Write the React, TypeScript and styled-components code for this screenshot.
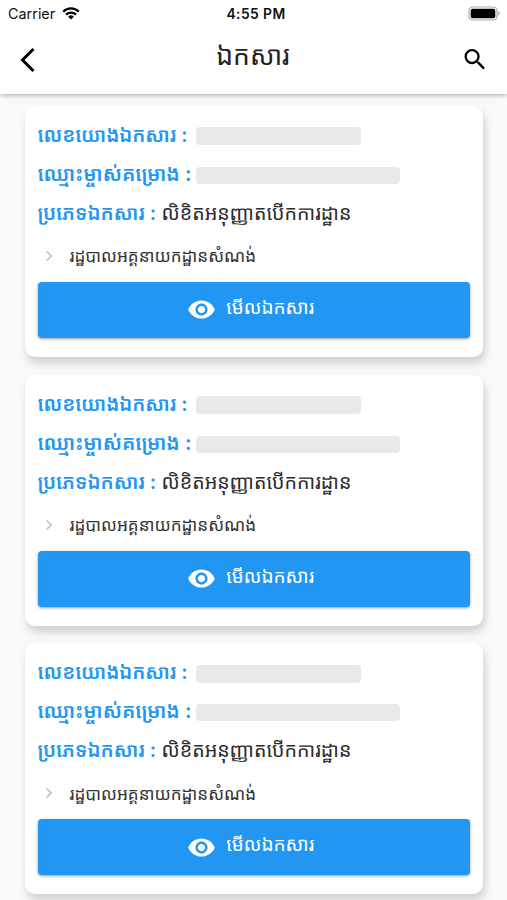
import React from 'react';
import styled, { createGlobalStyle } from 'styled-components';
import { MdSearch, MdVisibility, MdChevronRight } from 'react-icons/md';

const GlobalStyle = createGlobalStyle`
  * { box-sizing: border-box; }
  body { margin: 0; background: #fafafa; font-family: Inter, 'Noto Sans', 'Noto Sans Khmer', 'Khmer OS', sans-serif; }
`;

const Screen = styled.main`
  height: 900px;
  overflow: hidden;
  display: flex;
  flex-direction: column;
  background: #fafafa;
`;

const Header = styled.header`
  flex: none;
  position: relative;
  z-index: 1;
  height: 94px;
  background: #fff;
  box-shadow: 0 1px 5px rgba(0, 0, 0, 0.35);
`;

const StatusBar = styled.div`
  height: 27px;
  padding: 0 7px 0 8px;
  display: grid;
  grid-template-columns: 1fr auto 1fr;
  align-items: center;
  color: #111;
  font-size: 14px;
`;

const Carrier = styled.div`
  display: flex;
  align-items: center;
  gap: 7px;
  font-size: 14.4px;
`;

const Clock = styled.time`
  margin-left: 4px;
  font-size: 13.8px;
  font-weight: 600;
  letter-spacing: 0.45px;
`;

const BatterySlot = styled.div`
  display: flex;
  justify-content: flex-end;
`;

const NavBar = styled.nav`
  height: 66px;
  padding: 0 18px 0 14px;
  display: grid;
  grid-template-columns: 28px 1fr 28px;
  align-items: center;
`;

const IconButton = styled.button`
  width: 28px;
  height: 28px;
  margin-top: -1px;
  padding: 0;
  border: 0;
  background: none;
  display: flex;
  align-items: center;
  justify-content: center;
  color: #000;
`;

const Title = styled.h1`
  margin: 0 0 11px 3px;
  text-align: center;
  color: #222;
  font-size: 26.5px;
  font-weight: 400;
  line-height: 40px;
  white-space: nowrap;
`;

const List = styled.section`
  padding: 11.75px 24.5px 0 25px;
  display: flex;
  flex-direction: column;
  gap: 17.75px;
`;

const Card = styled.article`
  flex: none;
  height: 251px;
  padding: 11px 12.5px 0 12.5px;
  border-radius: 10px;
  background: #fff;
  box-shadow: 2px 6px 10px rgba(70, 85, 80, 0.25);
`;

const Field = styled.div`
  height: 39px;
  display: flex;
  align-items: center;
  white-space: nowrap;
  line-height: 36.5px;
`;

const Label = styled.span<{ $width: number; $size: number }>`
  flex: none;
  width: ${({ $width }) => $width}px;
  height: 39px;
  color: #2196f3;
  font-size: ${({ $size }) => $size}px;
  font-weight: 600;
`;

const Value = styled.span`
  height: 39px;
  color: #2b2b2b;
  font-size: 19.65px;
`;

const Placeholder = styled.span<{ $width: number; $height: number }>`
  width: ${({ $width }) => $width}px;
  height: ${({ $height }) => $height}px;
  border-radius: 4px;
  background: #e9e9e9;
`;

const Department = styled.div`
  height: 48px;
  padding: 0 0 4px 1px;
  display: flex;
  align-items: center;
  gap: 11px;
  color: #333;
  font-size: 17.1px;
  white-space: nowrap;

  svg { color: #c4c4c4; }
`;

const ViewButton = styled.button`
  width: 100%;
  height: 56px;
  padding: 0 6px 0 0;
  border: 0;
  border-radius: 4px;
  background: #2196f3;
  box-shadow: 0 1px 3px rgba(0, 0, 0, 0.4);
  display: flex;
  align-items: center;
  justify-content: center;
  gap: 10px;
  color: #fff;
  font-family: inherit;
  font-size: 19px;
`;

const ButtonText = styled.span`
  margin-bottom: 4px;
  line-height: 36px;
`;

const records = [1, 2, 3];

const Wifi = () => (
  <svg width="18" height="13" viewBox="0 0 18 13" fill="none" stroke="#000" strokeWidth="2.2">
    <path d="M1.2 4.7a11 11 0 0 1 15.6 0M4 7.6a7.1 7.1 0 0 1 10 0" />
    <path d="M9 12.5 6.1 9.7a4.1 4.1 0 0 1 5.8 0Z" fill="#000" stroke="none" />
  </svg>
);

const Battery = () => (
  <svg width="32" height="15" viewBox="0 0 32 15">
    <rect x="1" y="1" width="28" height="13" rx="3.8" fill="#fff" stroke="#aaa" strokeWidth="1.2" />
    <rect x="2.7" y="2.7" width="24.6" height="9.6" rx="2" />
    <path d="M30.4 5.3a2.4 2.4 0 0 1 0 4.4Z" fill="#aaa" />
  </svg>
);

const BackIcon = () => (
  <svg width="16" height="26" viewBox="0 0 16 26" fill="none" stroke="#000" strokeWidth="3">
    <path d="M13.5 2 2.5 13 13.5 24" />
  </svg>
);

const DocumentCard = () => (
  <Card>
    <Field>
      <Label $width={158.5} $size={19.7}>លេខយោងឯកសារ :</Label>
      <Placeholder $width={165} $height={18} />
    </Field>
    <Field>
      <Label $width={158.5} $size={20.2}>ឈ្មោះម្ចាស់គម្រោង :</Label>
      <Placeholder $width={204} $height={17} />
    </Field>
    <Field>
      <Label $width={124} $size={19.8}>ប្រភេទឯកសារ :</Label>
      <Value>លិខិតអនុញ្ញាតបើកការដ្ឋាន</Value>
    </Field>
    <Department>
      <MdChevronRight size={20} />
      <span>រដ្ឋបាលអគ្គនាយកដ្ឋានសំណង់</span>
    </Department>
    <ViewButton>
      <MdVisibility size={29} />
      <ButtonText>មើលឯកសារ</ButtonText>
    </ViewButton>
  </Card>
);

export default function App() {
  return (
    <Screen>
      <GlobalStyle />
      <Header>
        <StatusBar>
          <Carrier>Carrier <Wifi /></Carrier>
          <Clock>4:55 PM</Clock>
          <BatterySlot><Battery /></BatterySlot>
        </StatusBar>
        <NavBar>
          <IconButton aria-label="ថយក្រោយ"><BackIcon /></IconButton>
          <Title>ឯកសារ</Title>
          <IconButton aria-label="ស្វែងរក"><MdSearch size={29} /></IconButton>
        </NavBar>
      </Header>
      <List>{records.map((id) => <DocumentCard key={id} />)}</List>
    </Screen>
  );
}
